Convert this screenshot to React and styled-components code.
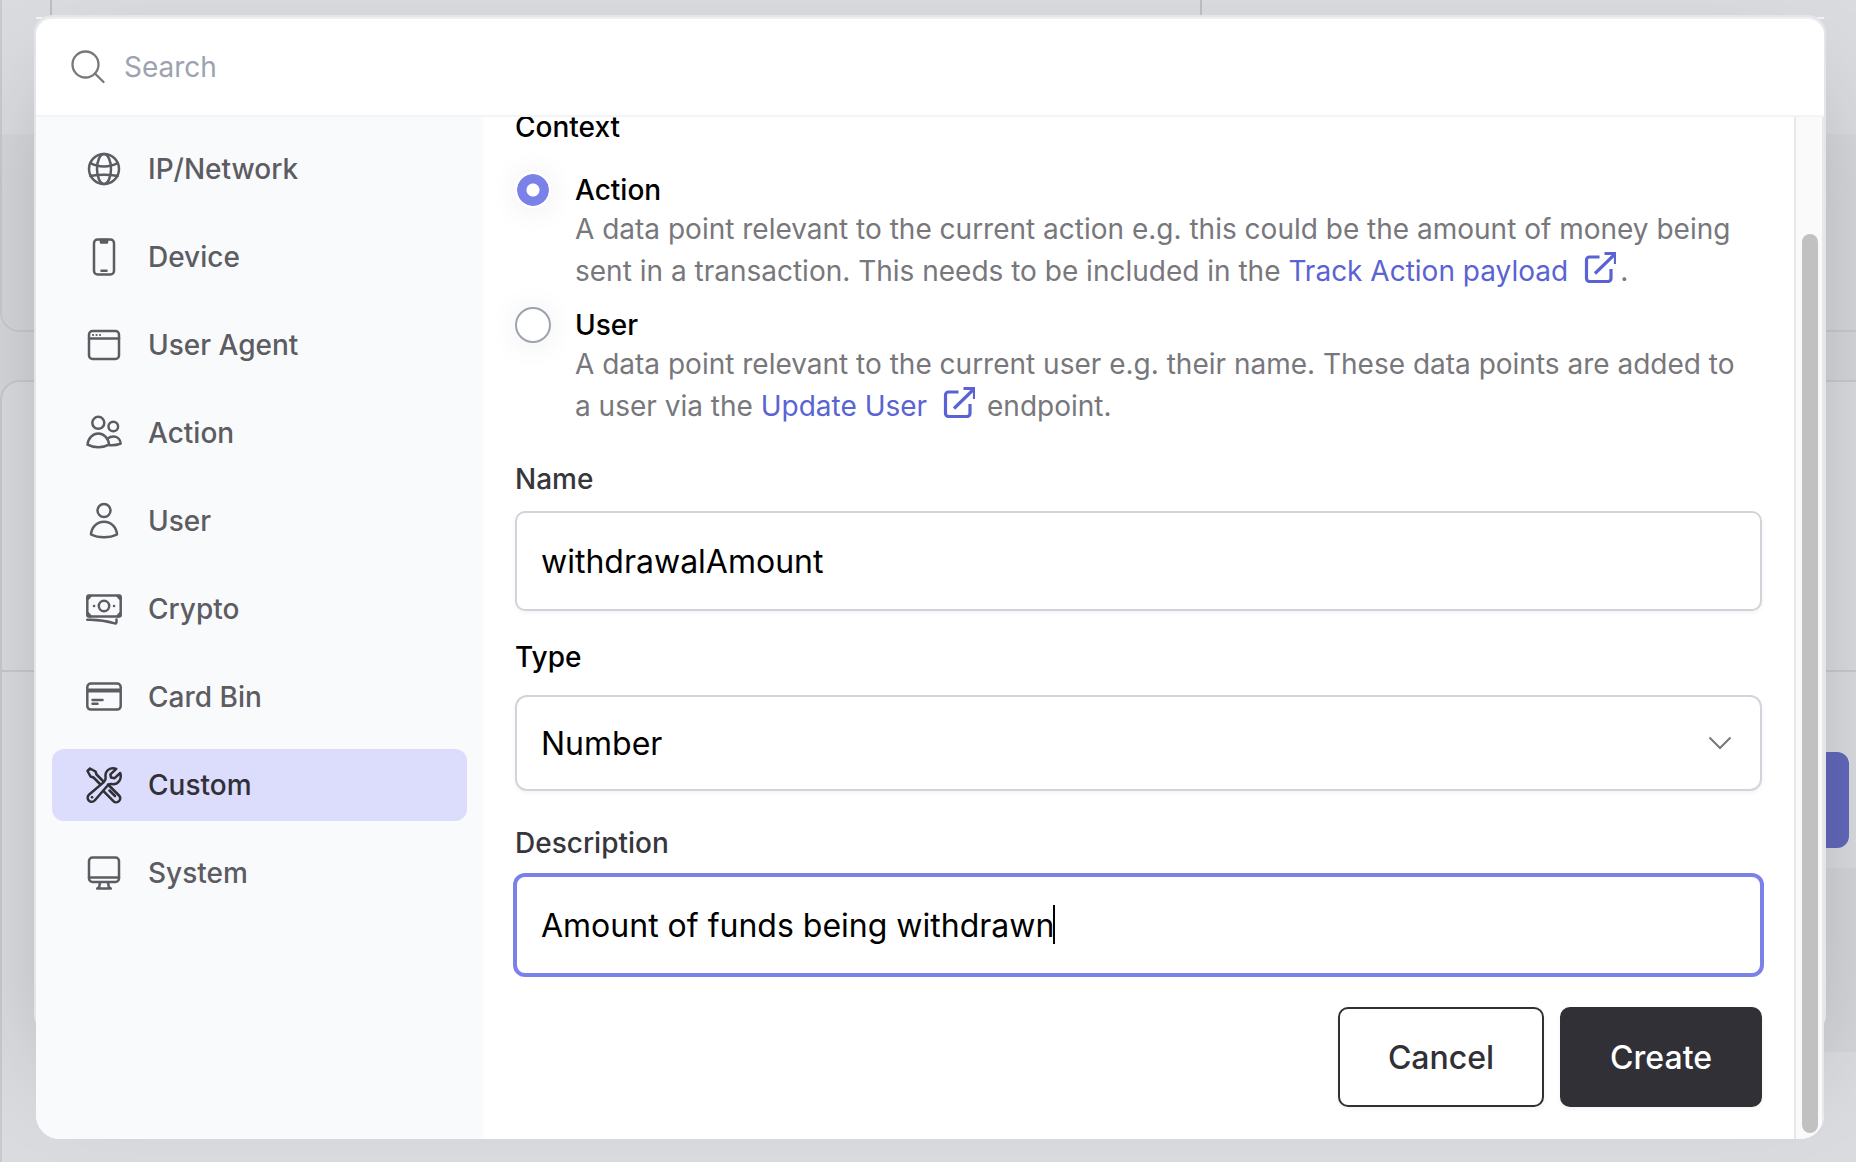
import React, { useEffect, useRef, useState } from "react";
import styled, { createGlobalStyle, css } from "styled-components";

const icons = {
  network: (
    <>
      <circle cx="18" cy="18" r="15" />
      <ellipse cx="18" cy="18" rx="7" ry="15" />
      <path d="M4.5 12.2c8 4.4 19 4.4 27 0M4.300 25c8-1.600 19.400-1.600 27.400 0" />
    </>
  ),
  device: (
    <>
      <rect x="8" y="0.500" width="20" height="35" rx="3.500" />
      <path d="M15 1h6v2.400h-6z" fill="currentColor" />
      <path d="M15.500 31.800h5" />
    </>
  ),
  agent: (
    <>
      <rect x="3" y="4" width="30" height="28" rx="3.500" />
      <path d="M3 11.600h30" />
      <path d="M7 8h.1M10.500 8h.1M14 8h.1" strokeWidth="2.100" />
    </>
  ),
  action: (
    <>
      <circle cx="12.300" cy="7.800" r="6" />
      <circle cx="27.300" cy="11.500" r="4.800" />
      <path d="M1.500 29.700C2.200 23 6.800 18.500 12.300 18.500s10.100 4.500 10.800 11.200c-6.500 3.500-15.100 3.500-21.600 0z" />
      <path d="M22 23.300c1.300-1.200 3.100-1.900 5.300-1.900 4 0 7 2.800 7.400 7.100-3.600 1.600-7.600 2-11.500 1.700" />
    </>
  ),
  user: (
    <>
      <circle cx="18" cy="7.500" r="6.500" />
      <path d="M5 31.500C5.500 24 11 18.800 18 18.800S30.500 24 31 31.500c-7.500 3.700-18.500 3.700-26 0z" />
    </>
  ),
  crypto: (
    <>
      <rect x="1.300" y="4.600" width="33.400" height="21" rx="1.500" />
      <circle cx="18" cy="15" r="5.200" />
      <path d="M8 15h.1M28 15h.1" />
      <path d="M1.800 7.500 4 5.100M32 5.100l2.200 2.400M1.800 22.700 4 25.100M32 25.100l2.200-2.400" strokeWidth="3.200" />
      <path d="M1.300 28.800c10-.4 19 1 27.500 3.600 1 .3 1.700-.4 1.700-1.300v-2.500" />
    </>
  ),
  card: (
    <>
      <rect x="1.300" y="4.600" width="33.400" height="26" rx="3.500" />
      <path d="M1.300 11.500h33.400" strokeWidth="3.800" strokeLinecap="butt" />
      <path d="M6.500 21h10M6.500 24.800h5" />
    </>
  ),
  custom: (
    <>
      <path d="M14.500 17.500 7.500 10.500 4.500 9.500 1.500 4 4 1.500 9.500 4.500 10.500 7.500 17 14" />
      <path d="M22 17.500l11 11c3.800 3.800-2 9.200-5.600 5.600L17.500 24" />
      <path d="M23.500 23.500l5.500 5.500" />
      <path d="M30.300 1.800C24 -.5 18.500 4 19.600 10.600c.3 2-.4 3.200-1.800 4.500L3.200 27.500c-4.500 4 1.700 10.300 5.700 5.700L21.200 19c1.300-1.500 2.400-2.200 4.400-1.900C32 18 36.300 12 34.200 6l-5.600 5.200-3.600-.7-.6-3.200z" />
      <path d="M6 30.300h.1" />
    </>
  ),
  system: (
    <>
      <rect x="3" y="2.500" width="30" height="24.500" rx="3.500" />
      <path d="M3 22.500h30M14 27.500l-.8 4.500-2 1.500h13.600l-2-1.500-.8-4.500" />
    </>
  ),
};

const categories = [
  { id: "network", label: "IP/Network" },
  { id: "device", label: "Device" },
  { id: "agent", label: "User Agent" },
  { id: "action", label: "Action" },
  { id: "user", label: "User" },
  { id: "crypto", label: "Crypto" },
  { id: "card", label: "Card Bin" },
  { id: "custom", label: "Custom" },
  { id: "system", label: "System" },
];

const ExternalLink = ({ children }) => (
  <Link href="#">
    {children}
    <LinkIcon viewBox="0 0 32 32" aria-hidden="true">
      <path d="M15.500 6H5.500a3 3 0 0 0-3 3v18.500a3 3 0 0 0 3 3H24a3 3 0 0 0 3-3v-9.500" />
      <path d="M11 22.500 31 3M20.500 2.500H31.500V13" />
    </LinkIcon>
  </Link>
);

// text field with its own 2px caret, placed after the measured text
const CaretInput = ({ value, ...props }) => {
  const ref = useRef(null);
  const [left, setLeft] = useState(0);
  const [focused, setFocused] = useState(false);

  const measure = () => {
    const input = ref.current;
    const style = getComputedStyle(input);
    const ctx = document.createElement("canvas").getContext("2d");
    ctx.font = `${style.fontWeight} ${style.fontSize} ${style.fontFamily}`;
    const text = input.value.slice(0, input.selectionStart);
    setLeft(25 + Math.round(ctx.measureText(text).width) - input.scrollLeft);
  };

  useEffect(() => {
    const input = ref.current;
    input.focus({ preventScroll: true });
    input.setSelectionRange(input.value.length, input.value.length);
    setFocused(true);
    measure();
  }, []);

  useEffect(measure, [value]);

  return (
    <CaretWrap>
      <Input
        {...props}
        ref={ref}
        value={value}
        $ownCaret
        onSelect={measure}
        onFocus={() => setFocused(true)}
        onBlur={() => setFocused(false)}
      />
      {focused && <Caret style={{ left }} />}
    </CaretWrap>
  );
};

const App = () => {
  const [active, setActive] = useState("custom");
  const [context, setContext] = useState("action");
  const [name, setName] = useState("withdrawalAmount");
  const [type, setType] = useState("number");
  const [description, setDescription] = useState("Amount of funds being withdrawn");

  return (
    <Page>
      <GlobalStyle />
      <Behind aria-hidden="true">
        <TopCard>
          <TopCardBody />
          <TopCardFooter />
        </TopCard>
        <MainCard>
          <MainCardHead />
          <MainCardBody>
            <BehindButton />
          </MainCardBody>
          <MainCardFooter />
        </MainCard>
      </Behind>
      <Overlay>
        <Frame>
          <Modal role="dialog" aria-label="Create data point">
            <SearchBar>
              <SearchIcon viewBox="0 0 36 36" aria-hidden="true">
                <circle cx="15.500" cy="15.500" r="13" />
                <path d="M25 24.500l8.500 8.500" />
              </SearchIcon>
              <SearchInput type="search" placeholder="Search" aria-label="Search" />
            </SearchBar>
            <Body>
              <Sidebar>
                {categories.map((item) => (
                  <NavItem
                    key={item.id}
                    type="button"
                    $active={item.id === active}
                    onClick={() => setActive(item.id)}
                  >
                    <NavIcon viewBox="0 0 36 36" aria-hidden="true">
                      {icons[item.id]}
                    </NavIcon>
                    {item.label}
                  </NavItem>
                ))}
              </Sidebar>
              <Form onSubmit={(e) => e.preventDefault()}>
                <Legend>Context</Legend>
                <Options role="radiogroup" aria-label="Context">
                  <Option>
                    <Radio
                      id="context-action"
                      name="context"
                      checked={context === "action"}
                      onChange={() => setContext("action")}
                    />
                    <div>
                      <OptionLabel htmlFor="context-action">Action</OptionLabel>
                      <OptionText>
                        A data point relevant to the current action e.g. this could be the amount
                        of money being sent in a transaction. This needs to be included in the{" "}
                        <ExternalLink>Track Action payload</ExternalLink>.
                      </OptionText>
                    </div>
                  </Option>
                  <Option>
                    <Radio
                      id="context-user"
                      name="context"
                      checked={context === "user"}
                      onChange={() => setContext("user")}
                    />
                    <div>
                      <OptionLabel htmlFor="context-user">User</OptionLabel>
                      <OptionText>
                        A data point relevant to the current user e.g. their name. These data
                        points are added to a user via the <ExternalLink>Update User</ExternalLink>{" "}
                        endpoint.
                      </OptionText>
                    </div>
                  </Option>
                </Options>
                <Field>
                  <Label htmlFor="name">Name</Label>
                  <Input id="name" value={name} onChange={(e) => setName(e.target.value)} />
                </Field>
                <SelectField>
                  <Label $dark htmlFor="type">
                    Type
                  </Label>
                  <SelectWrap>
                    <Select id="type" value={type} onChange={(e) => setType(e.target.value)}>
                      <option value="number">Number</option>
                      <option value="text">Text</option>
                      <option value="boolean">Boolean</option>
                    </Select>
                    <Chevron viewBox="0 0 24 14" aria-hidden="true">
                      <path d="M1.500 1.500 12 12 22.500 1.500" />
                    </Chevron>
                  </SelectWrap>
                </SelectField>
                <Field>
                  <Label htmlFor="description">Description</Label>
                  <CaretInput
                    id="description"
                    value={description}
                    onChange={(e) => setDescription(e.target.value)}
                  />
                </Field>
                <Actions>
                  <Button type="button">Cancel</Button>
                  <Button type="submit" $primary>
                    Create
                  </Button>
                </Actions>
              </Form>
              <ScrollTrack>
                <ScrollThumb />
              </ScrollTrack>
            </Body>
          </Modal>
        </Frame>
      </Overlay>
    </Page>
  );
};

export default App;

const GlobalStyle = createGlobalStyle`
  * {
    box-sizing: border-box;
  }
  body {
    margin: 0;
    font-family: Inter, "Liberation Sans", sans-serif;
    background: #dadbdf;
  }
  button, input, select {
    font-family: inherit;
  }
`;

const Page = styled.main`
  display: grid;
  grid-template-columns: minmax(0, 1fr);
  min-height: 100vh;
  overflow: hidden;
`;

const Behind = styled.div`
  grid-area: 1 / 1;
  display: flex;
  flex-direction: column;
  gap: 48px;
  background: #d5d6d9;
`;

const TopCard = styled.div`
  display: flex;
  flex-direction: column;
  height: 332px;
  border: 2px solid #c8c9cd;
  border-width: 0 0 2px 2px;
  border-radius: 0 0 0 20px;
  background: #dadbdf;
  overflow: hidden;
`;

const TopCardBody = styled.div`
  height: 134px;
  margin-left: 48px;
  width: 1152px;
  border: 2px solid #bcbdc1;
  border-width: 0 2px;
`;

const TopCardFooter = styled.div`
  flex: 1;
  background: #d5d6da;
`;

const MainCard = styled.div`
  flex: 1;
  display: flex;
  flex-direction: column;
  border: 2px solid #c8c9cd;
  border-width: 2px 0 0 2px;
  border-radius: 20px 0 0 0;
  background: #dadbdf;
`;

const MainCardHead = styled.div`
  height: 290px;
  border-bottom: 2px solid #c8c9cd;
`;

const MainCardBody = styled.div`
  display: flex;
  justify-content: flex-end;
  height: 196px;
  padding: 80px 7px 20px;
`;

const BehindButton = styled.div`
  width: 160px;
  border-radius: 12px;
  background: #6268bb;
`;

const MainCardFooter = styled.div`
  height: 184px;
  margin-left: 48px;
  background: #d4d5d9;
`;

const Overlay = styled.div`
  grid-area: 1 / 1;
  z-index: 1;
  padding: 17px 32px 23px 36px;
`;

const Frame = styled.div`
  position: relative;
  border-top: 2px solid #f3f4f6;

  &::before {
    content: "";
    position: absolute;
    inset: -2px 0 108px;
    border-radius: 16px;
    background: #eeeff2;
    box-shadow: 0 0 0 2px #e4e5e9, 0 50px 100px -24px rgba(0, 0, 0, 0.25);
  }
`;

const Modal = styled.section`
  position: relative;
  border-radius: 16px 16px 24px 24px;
  background: #fff;
  overflow: hidden;
`;

const SearchBar = styled.div`
  display: flex;
  align-items: center;
  gap: 18px;
  height: 98px;
  padding: 0 34px;
  border-bottom: 2px solid #f3f4f6;
`;

const SearchIcon = styled.svg`
  width: 36px;
  height: 36px;
  fill: none;
  stroke: #77777c;
  stroke-width: 2.3;
  stroke-linecap: round;
`;

const SearchInput = styled.input`
  flex: 1;
  height: 60px;
  padding: 0;
  border: 0;
  outline: 0;
  background: none;
  font-size: 28px;

  &::placeholder {
    color: #9ca3af;
  }
`;

const Body = styled.div`
  display: flex;
`;

const Sidebar = styled.nav`
  flex: none;
  display: flex;
  flex-direction: column;
  gap: 16px;
  width: 447px;
  padding: 16px;
  background: #f9fafc;
`;

const NavItem = styled.button`
  display: flex;
  align-items: center;
  gap: 26px;
  height: 72px;
  padding: 0 34px;
  border: 0;
  border-radius: 12px;
  background: ${({ $active }) => ($active ? "#dcdcfc" : "transparent")};
  color: ${({ $active }) => ($active ? "#303036" : "#5c5c62")};
  font-size: 28px;
  font-weight: 500;
  text-align: left;
  cursor: pointer;
`;

const NavIcon = styled.svg`
  width: 36px;
  height: 36px;
  fill: none;
  stroke: currentColor;
  stroke-width: 2.5;
  stroke-linecap: round;
  stroke-linejoin: round;
  overflow: visible;
`;

const Form = styled.form`
  flex: 1;
  min-width: 0;
  padding: 0 32px 32px;
  overflow: hidden;
`;

const Legend = styled.h2`
  margin: -10px 0 25px;
  color: #000;
  font-size: 28px;
  font-weight: 500;
  line-height: 40px;
`;

const Options = styled.div`
  display: flex;
  flex-direction: column;
  gap: 15px;
  margin-bottom: 32px;
`;

const Option = styled.div`
  display: flex;
  align-items: flex-start;
  gap: 24px;
  padding-right: 16px;
`;

const Radio = styled.input.attrs({ type: "radio" })`
  appearance: none;
  flex: none;
  width: 36px;
  height: 36px;
  margin: 0;
  border: 2px solid #9ca3af;
  border-radius: 50%;
  background: #fff;
  box-shadow: 0 2px 30px rgba(0, 0, 0, 0.08);

  &:checked {
    border-color: #fff;
    background: radial-gradient(circle, #fff 6px, #7a82ea 7px);
    background-clip: padding-box;
  }
`;

const OptionLabel = styled.label`
  display: block;
  color: #000;
  font-size: 28px;
  font-weight: 500;
  line-height: 36px;
`;

const OptionText = styled.p`
  margin: 0;
  color: #77777c;
  font-size: 28px;
  line-height: 42px;
`;

const Link = styled.a`
  color: #5a63d3;
  text-decoration: none;
`;

const LinkIcon = styled.svg`
  width: 32px;
  height: 32px;
  margin: 0 4px 0 16px;
  vertical-align: -2px;
  fill: none;
  stroke: currentColor;
  stroke-width: 3.2;
`;

const Field = styled.div`
  display: flex;
  flex-direction: column;
  gap: 12px;
`;

const SelectField = styled(Field)`
  gap: 18px;
  margin: 26px 0 32px;
`;

const Label = styled.label`
  color: ${({ $dark }) => ($dark ? "#000" : "#36363c")};
  font-size: 28px;
  font-weight: 500;
  line-height: 40px;
`;

const control = css`
  width: 100%;
  padding: 0 24px;
  border: 2px solid #d1d5db;
  outline: 0;
  background: #fff;
  color: #000;
  font-size: 32px;
  box-shadow: 0 2px 4px rgba(0, 0, 0, 0.05);
`;

const Input = styled.input`
  ${control}
  height: 100px;
  border-radius: 10px;
  caret-color: ${({ $ownCaret }) => ($ownCaret ? "transparent" : "auto")};

  &:focus {
    border-color: #7a82ea;
    box-shadow: 0 0 0 2px #7a82ea;
  }
`;

const CaretWrap = styled.div`
  position: relative;
  display: flex;
`;

const Caret = styled.span`
  position: absolute;
  top: 30px;
  width: 2px;
  height: 39px;
  background: #000;
  pointer-events: none;
`;

const SelectWrap = styled.div`
  display: grid;
  align-items: center;
`;

const Select = styled.select`
  ${control}
  grid-area: 1 / 1;
  height: 96px;
  border-radius: 12px;
  appearance: none;
`;

const Chevron = styled.svg`
  grid-area: 1 / 1;
  justify-self: end;
  width: 24px;
  height: 14px;
  margin-right: 30px;
  fill: none;
  stroke: #77777c;
  stroke-width: 2;
  pointer-events: none;
`;

const Actions = styled.div`
  display: flex;
  justify-content: flex-end;
  gap: 16px;
  margin-top: 32px;
`;

const Button = styled.button`
  height: 100px;
  padding: 0 48px;
  border: 2px solid #303036;
  border-radius: 10px;
  background: ${({ $primary }) => ($primary ? "#303036" : "#fff")};
  color: ${({ $primary }) => ($primary ? "#fff" : "#303036")};
  font-size: 32px;
  font-weight: 500;
  box-shadow: 0 2px 4px rgba(0, 0, 0, 0.05);
  cursor: pointer;
`;

const ScrollTrack = styled.div`
  flex: none;
  display: flex;
  width: 30px;
  padding: 117px 4px 6px 6px;
  border: 2px solid #e8e8e8;
  border-width: 0 2px;
  background: #fafafa;
`;

const ScrollThumb = styled.div`
  flex: 1;
  border-radius: 8px;
  background: #c1c1c1;
`;
